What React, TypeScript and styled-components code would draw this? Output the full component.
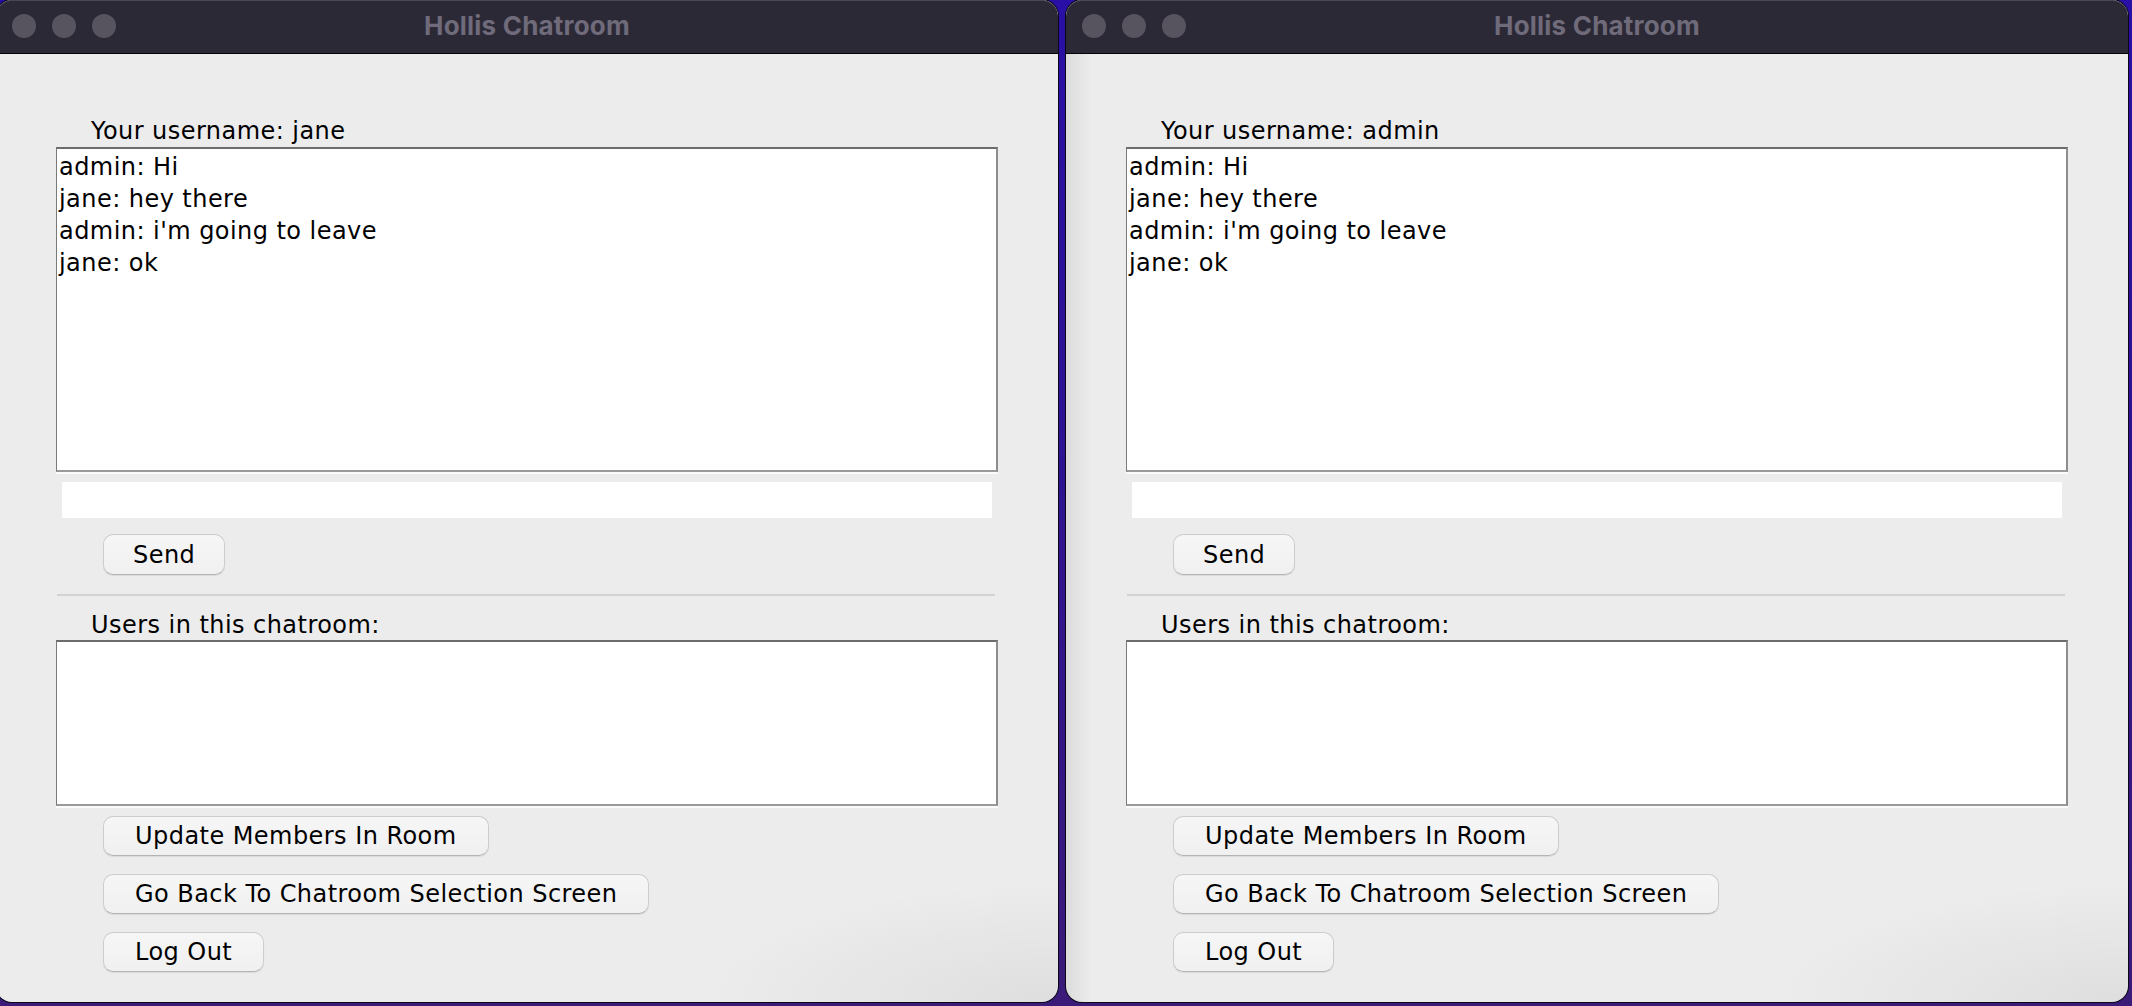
import styled, { createGlobalStyle } from 'styled-components';

const GlobalStyle = createGlobalStyle`
  html, body {
    margin: 0;
    padding: 0;
    height: 1006px;
    overflow: hidden;
  }
  body {
    background: linear-gradient(180deg, #2a0fa6 0%, #2e1392 45%, #3a1b78 100%);
    font-family: 'DejaVu Sans', 'Noto Sans', sans-serif;
  }
`;

const Desktop = styled.div`
  display: flex;
  gap: 8px;
  margin-left: -4px;
  height: 1006px;
`;

const Window = styled.div<{ $shadeLeft?: boolean }>`
  position: relative;
  display: flex;
  flex-direction: column;
  width: 1062px;
  height: 1002px;
  border-radius: 16px;
  overflow: hidden;
  background: #ececec;
  box-shadow: 0 0 0 1px #0b0718;
  &::after {
    content: '';
    position: absolute;
    inset: 54px 0 0 0;
    pointer-events: none;
    background:
      ${(p) =>
        p.$shadeLeft
          ? 'linear-gradient(90deg, rgba(0,0,0,0.07) 0, rgba(0,0,0,0) 26px),'
          : ''}
      radial-gradient(ellipse 360px 120px at 100% 100%, rgba(0,0,0,0.06), rgba(0,0,0,0));
  }
`;

const TitleBar = styled.div`
  position: relative;
  flex: none;
  height: 53px;
  display: flex;
  align-items: center;
  justify-content: center;
  background: #2c2937;
  border-bottom: 1px solid #050409;
  box-shadow: inset 0 1px 0 #4a4656;
  border-radius: 16px 16px 0 0;
`;

const Lights = styled.div`
  position: absolute;
  left: 16px;
  top: 14px;
  display: flex;
  gap: 16px;
`;

const Light = styled.span`
  width: 24px;
  height: 24px;
  border-radius: 50%;
  background: #57535f;
`;

const Title = styled.div`
  font-family: Inter, 'Liberation Sans', sans-serif;
  font-weight: 700;
  font-size: 26px;
  letter-spacing: 0.2px;
  color: #6f6b7a;
  margin-top: -3px;
`;

const Content = styled.div`
  display: flex;
  flex-direction: column;
  align-items: flex-start;
  padding: 0 60px;
  font-size: 24px;
  letter-spacing: 0.45px;
  color: #000;
`;

const Label = styled.div<{ $top: number }>`
  height: 28px;
  line-height: 28px;
  margin-top: ${(p) => p.$top}px;
  padding-left: 35px;
  white-space: nowrap;
`;

const TextBox = styled.div<{ $height: number }>`
  box-sizing: border-box;
  align-self: stretch;
  height: ${(p) => p.$height}px;
  margin-top: ${(p) => (p.$height > 200 ? 2 : 1)}px;
  background: #fff;
  border-style: solid;
  border-width: 2px 2px 2px 1px;
  border-color: #6c6c6c #8e8e8e #9a9a9a #7a7a7a;
  box-shadow: 0 2px 0 #fbfbfb;
  padding: 2px 2px;
`;

const Line = styled.div`
  height: 32px;
  line-height: 32px;
  white-space: nowrap;
`;

const MessageInput = styled.div`
  align-self: stretch;
  height: 36px;
  margin: 10px 6px 0;
  background: #fff;
`;

const Button = styled.button<{ $pad?: number }>`
  box-sizing: border-box;
  height: 40px;
  margin-left: 47px;
  padding: 0 ${(p) => p.$pad ?? 31}px;
  font-family: inherit;
  font-size: 24px;
  letter-spacing: 0.45px;
  color: #000;
  background: linear-gradient(180deg, #f6f6f6, #f0f0f0);
  border: 1px solid #cdcdcd;
  border-bottom-color: #b4b4b4;
  border-radius: 10px;
  box-shadow: 0 1px 1px rgba(0, 0, 0, 0.08);
  white-space: nowrap;
`;

const SendButton = styled(Button)`
  height: 41px;
  margin-top: 16px;
`;

const Separator = styled.div`
  align-self: stretch;
  height: 2px;
  margin: 19px 3px 0 1px;
  background: #d2d2d2;
`;

const ButtonStack = styled.div`
  display: flex;
  flex-direction: column;
  align-items: flex-start;
  gap: 18px;
  margin-top: 10px;
`;

const messages = ['admin: Hi', 'jane: hey there', "admin: i'm going to leave", 'jane: ok'];

function ChatWindow({ username, shadeLeft }: { username: string; shadeLeft?: boolean }) {
  return (
    <Window $shadeLeft={shadeLeft}>
      <TitleBar>
        <Lights>
          <Light />
          <Light />
          <Light />
        </Lights>
        <Title>Hollis Chatroom</Title>
      </TitleBar>
      <Content>
        <Label $top={63}>Your username: {username}</Label>
        <TextBox $height={325}>
          {messages.map((m) => (
            <Line key={m}>{m}</Line>
          ))}
        </TextBox>
        <MessageInput />
        <SendButton $pad={29}>Send</SendButton>
        <Separator />
        <Label $top={15}>Users in this chatroom:</Label>
        <TextBox $height={166} />
        <ButtonStack>
          <Button>Update Members In Room</Button>
          <Button>Go Back To Chatroom Selection Screen</Button>
          <Button>Log Out</Button>
        </ButtonStack>
      </Content>
    </Window>
  );
}

export default function App() {
  return (
    <>
      <GlobalStyle />
      <Desktop>
        <ChatWindow username="jane" />
        <ChatWindow username="admin" shadeLeft />
      </Desktop>
    </>
  );
}
